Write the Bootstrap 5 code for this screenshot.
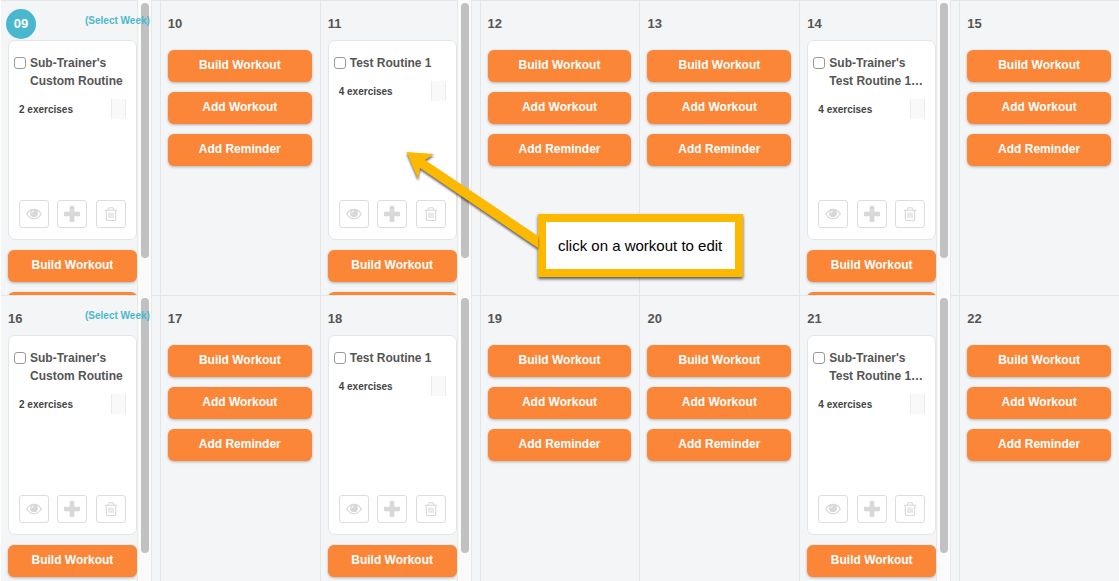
<!DOCTYPE html>
<html lang="en">
<head>
<meta charset="utf-8">
<meta name="viewport" content="width=device-width, initial-scale=1">
<title>Workout calendar</title>
<link href="https://cdn.jsdelivr.net/npm/bootstrap@5.3.0/dist/css/bootstrap.min.css" rel="stylesheet">
<style>
  body { font-family: "Liberation Sans", Arial, sans-serif; font-size: 13px; line-height: 18px; color: #555; background: #f4f5f7; }
  .calendar { height: 100vh; }
  .day { height: 295px; border-left: 1px solid #e4e5e7; box-shadow: inset 0 1px #e4e5e7; }
  .day:first-child { border-left-color: #fff; }
  .day-body { padding-left: 7px; min-width: 0; }
  .day-head { height: 40px; padding-top: 7px; }
  .today { width: 30px; height: 30px; margin-left: -2px; background: #49b8ce; color: #fff; }
  .week-link { font-size: 10px; line-height: 14px; color: #49b8ce; margin: -6px -13px 0 0; z-index: 1; }
  .plain .day-stack { padding-top: 10px; }
  .day-stack { gap: 10px; }
  .track { width: 15px; background: #fafafa; border: solid #e8e8e8; border-width: 0 1px; padding: 3px 2px 0 3px; }
  .thumb { width: 8px; height: 255px; background: #c1c1c1; }
  .btn-plan { height: 32px; padding: 0 0 2px; border: 0; border-radius: 6px; background: #fb8637; color: #fff; font-size: 12px; font-weight: 700; line-height: 16px; box-shadow: 0 1px 3px rgba(0,0,0,.28); }
  .btn-plan:hover { background: #ee7928; color: #fff; }
  .routine { height: 200px; padding: 13px 10px 11px; border: 1px solid #e4e5e7; border-radius: 7px; color: #444; }
  .routine-title { gap: 4px; margin: 0 -9px 8px -5px; font-size: 12px; font-weight: 700; color: #555; }
  .routine-title input { width: 12px; height: 12px; margin: 3px 0 0; border: 1px solid #999; border-radius: 3px; appearance: none; background: #fff; flex: none; }
  .routine-title input:checked { background: #49b8ce; }
  .count { font-size: 10px; padding-top: 3px; }
  .grip { width: 15px; height: 20px; background: #f9f9f9; border: solid #ececec; border-width: 0 1px; }
  .btn-tool { width: 30px; height: 28px; padding: 0; border: 1px solid #ddd; border-radius: 3px; color: #d8d8d8; background: #fff; }
  .btn-tool svg { display: block; margin: auto; }
  .callout { left: 538px; top: 214px; padding: 14px 13px 13px 12px; border: 8px solid #fdb900; background: #fff; color: #000; font-size: 15px; line-height: 20px; box-shadow: 0 2px 3px rgba(0,0,0,.65); }
  .callout svg { left: -140px; top: -70px; filter: drop-shadow(0 2px 1px rgba(0,0,0,.6)); pointer-events: none; }
</style>
</head>
<body>
<main class="calendar position-relative overflow-hidden">
  <div id="weeks"></div>
  <div class="callout position-absolute text-nowrap">
    <svg class="position-absolute" width="134" height="102" viewBox="0 0 134 102" aria-hidden="true"><path fill="#fdb900" d="M.5 0 28 2 19 8 132 84v12L14 16 12 27Z"/></svg>
    click on a workout to edit
  </div>
</main>
<script src="https://cdn.jsdelivr.net/npm/bootstrap@5.3.0/dist/js/bootstrap.bundle.min.js"></script>
<script>
  const custom = { name: "Sub-Trainer's<br>Custom Routine", count: 2 };
  const test1 = { name: "Test Routine 1", count: 4 };
  const test14 = { name: "Sub-Trainer's<br>Test Routine 1…", count: 4 };
  const plan = [custom, null, test1, null, null, test14, null];

  const tools = [
    ["View", '<svg width="16" height="12" viewBox="0 0 16 12"><path fill="none" stroke="currentColor" stroke-width="1.200" d="M.7 6Q3.500 1.300 8 1.300T15.300 6Q12.500 10.700 8 10.700T.7 6Z"/><circle cx="8" cy="5.200" r="3.900" fill="currentColor"/><path fill="none" stroke="#fff" stroke-width=".9" d="M5.800 5.200A2.200 2.200 0 0 1 8 3"/></svg>'],
    ["Add", '<svg width="16" height="16" viewBox="0 0 16 16"><path fill="currentColor" d="M6.700 0h2.600q1 0 1 1v4.700H15q1 0 1 1v2.600q0 1-1 1h-4.700V15q0 1-1 1H6.700q-1 0-1-1v-4.700H1q-1 0-1-1V6.700q0-1 1-1h4.700V1q0-1 1-1Z"/></svg>'],
    ["Delete", '<svg width="14" height="14" viewBox="0 0 14 14" fill="none" stroke="currentColor" stroke-width="1.100"><path d="M.8 3.300h12.400M4.300 3.200 5 .8h4l.7 2.400M2.300 3.500v8.700q0 1.300 1.200 1.300h7q1.200 0 1.200-1.300V3.500M5 5.500v5.500M7 5.500v5.500M9 5.500v5.500"/></svg>']
  ];

  const routineCard = (r, id) => `
    <article class="routine bg-white d-flex flex-column">
      <div class="routine-title d-flex align-items-start">
        <input type="checkbox" id="${id}"><label class="text-nowrap" for="${id}">${r.name}</label>
      </div>
      <div class="d-flex justify-content-between align-items-center">
        <strong class="count">${r.count} exercises</strong><span class="grip"></span>
      </div>
      <div class="d-flex justify-content-between mt-auto">
        ${tools.map(([t, s]) => `<button type="button" class="btn btn-tool" aria-label="${t}">${s}</button>`).join("")}
      </div>
    </article>`;

  const planButton = t => `<button type="button" class="btn btn-plan w-100">${t}</button>`;

  const day = (n, col) => {
    const r = plan[col];
    return `<section class="day col d-flex overflow-hidden pe-2 ${r ? "" : "plain"}">
      <div class="day-body flex-grow-1">
        <div class="day-head d-flex justify-content-between align-items-center">
          <strong class="${n === 9 ? "today rounded-circle d-flex align-items-center justify-content-center" : ""}">${String(n).padStart(2, "0")}</strong>
          ${col === 0 ? '<a href="#" class="week-link position-relative fw-bold text-decoration-none text-nowrap">(Select Week)</a>' : ""}
        </div>
        <div class="day-stack d-flex flex-column">
          ${r
            ? routineCard(r, "routine-" + n) + planButton("Build Workout") + '<button type="button" class="btn btn-plan w-100" aria-label="Add Workout"></button>'
            : ["Build Workout", "Add Workout", "Add Reminder"].map(planButton).join("")}
        </div>
      </div>
      ${r ? '<div class="track flex-shrink-0"><div class="thumb rounded-pill"></div></div>' : ""}
    </section>`;
  };

  document.getElementById("weeks").innerHTML = [9, 16].map(start =>
    `<div class="row g-0">${plan.map((_, i) => day(start + i, i)).join("")}</div>`).join("");
</script>
</body>
</html>
